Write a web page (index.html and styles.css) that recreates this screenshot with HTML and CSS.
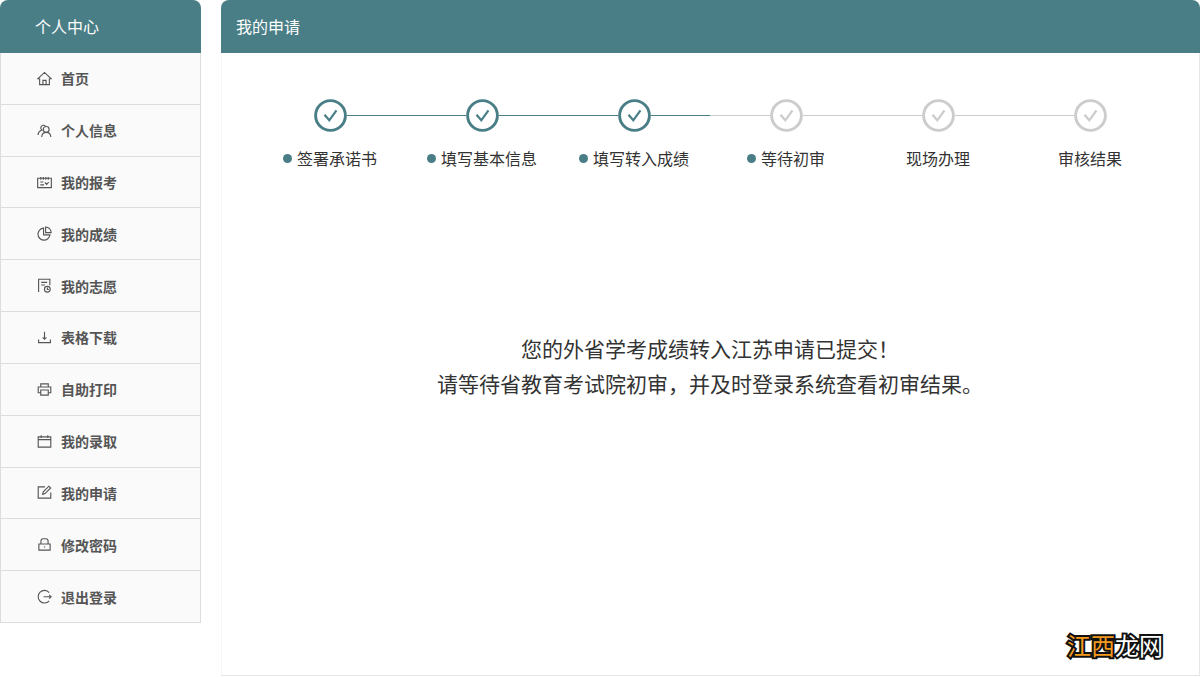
FILE: index.html
```html
<!DOCTYPE html>
<html lang="zh-CN">
<head>
<meta charset="utf-8">
<meta name="viewport" content="width=device-width, initial-scale=1">
<title>我的申请</title>
<link rel="stylesheet" href="styles.css">
</head>
<body>
<svg class="symbols" aria-hidden="true">
  <symbol id="check" viewBox="0 0 33 33">
    <circle cx="16.5" cy="16.5" r="14.9" stroke-width="2.9"/>
    <path d="M10.5 15.8 15.3 21.3 22.5 11.3" stroke-width="2.2"/>
  </symbol>
</svg>
<div class="page">
  <aside class="sidebar">
    <h2 class="bar bar-side">个人中心</h2>
    <nav class="menu" aria-label="个人中心">
      <a class="item" href="#"><svg class="icon" viewBox="0 0 16 16"><path d="M2.8 8.3H.8L8 1.5l7.2 6.8h-2M2.8 8v6.5h10.4V8M6.3 14.5V10h3.4v4.5"/></svg>首页</a>
      <a class="item" href="#"><svg class="icon" viewBox="0 0 16 16"><circle cx="9.8" cy="6.8" r="3.1"/><path d="M5 15c.2-3 2-5 4.8-5s4.7 2 5 5M6 8A2.9 2.9 0 1 1 9 3.2M1 12.7C1.3 10.400 2.400 8.700 4.700 7.800"/></svg>个人信息</a>
      <a class="item" href="#"><svg class="icon" viewBox="0 0 16 16"><path d="M.7 3.500h14.600v10H.7zM4 2v3M6.700 2v3M9.400 2v3M12 2v3M3.500 7.500h3.200M3.500 10.500h4M8.500 8l1.800 2 2.200-2.300"/></svg>我的报考</a>
      <a class="item" href="#"><svg class="icon" viewBox="0 0 16 16"><path d="M7 2.300a6.400 6.400 0 1 0 6.800 7.200H7zM9.200 1v6h5.900A6.100 6.100 0 0 0 9.200 1z"/></svg>我的成绩</a>
      <a class="item" href="#"><svg class="icon" viewBox="0 0 16 16"><path d="M1.700 15V1.300h12V7.800M4.500 4.700h6.300M4.500 7.500h4"/><circle cx="11" cy="12" r="3.100"/><path d="M11 10v2.300h1.700"/></svg>我的志愿</a>
      <a class="item" href="#"><svg class="icon" viewBox="0 0 16 16"><path d="M1.700 10v3.500h12.600V10M8 1.800v8M6 7.800l2 2.100 2-2.100"/></svg>表格下载</a>
      <a class="item" href="#"><svg class="icon" viewBox="0 0 16 16"><path d="M4 5.300V2h8v3.300M4 11.500H1.300V5.300h13.400v6.200H12M4 8.500h8V14H4z"/></svg>自助打印</a>
      <a class="item" href="#"><svg class="icon" viewBox="0 0 16 16"><path d="M1.300 3h13.400v11H1.300zM1.300 6h13.400M4.500 1.300v3M11.500 1.300v3"/></svg>我的录取</a>
      <a class="item" href="#"><svg class="icon" viewBox="0 0 16 16"><path d="M8.500 2H1.300v12h13.400V8M6 10l.7-2.700 6-6 1.900 1.900-6 6z"/></svg>我的申请</a>
      <a class="item" href="#"><svg class="icon" viewBox="0 0 16 16"><path d="M2 7.500h12v6.500H2zM4.200 7.500V4.300Q4.200 1.800 6.500 1.800h3Q11.800 1.800 11.800 4.300v3.200M7.300 10.700h1.400"/></svg>修改密码</a>
      <a class="item" href="#"><svg class="icon" viewBox="0 0 16 16"><path d="M13 3.800a6.700 6.700 0 1 0 0 8.800M7 8.200h8M13 6.200l2 2-2 2"/></svg>退出登录</a>
    </nav>
  </aside>
  <main class="panel">
    <h1 class="bar">我的申请</h1>
    <div class="content">
      <ol class="steps">
        <li class="step done"><div class="track"><span class="line"></span><svg class="mark"><use href="#check"/></svg><span class="line"></span></div><div class="label dot">签署承诺书</div></li>
        <li class="step done"><div class="track"><span class="line"></span><svg class="mark"><use href="#check"/></svg><span class="line"></span></div><div class="label dot">填写基本信息</div></li>
        <li class="step done"><div class="track"><span class="line"></span><svg class="mark"><use href="#check"/></svg><span class="line"></span></div><div class="label dot">填写转入成绩</div></li>
        <li class="step"><div class="track"><span class="line"></span><svg class="mark"><use href="#check"/></svg><span class="line"></span></div><div class="label dot">等待初审</div></li>
        <li class="step"><div class="track"><span class="line"></span><svg class="mark"><use href="#check"/></svg><span class="line"></span></div><div class="label">现场办理</div></li>
        <li class="step"><div class="track"><span class="line"></span><svg class="mark"><use href="#check"/></svg><span class="line"></span></div><div class="label">审核结果</div></li>
      </ol>
      <p class="message">您的外省学考成绩转入江苏申请已提交！<br>请等待省教育考试院初审，并及时登录系统查看初审结果。</p>
    </div>
    <div class="watermark"><span class="accent">江西</span>龙网</div>
  </main>
</div>
</body>
</html>
```
FILE: styles.css
```css
* {
  box-sizing: border-box;
}

body {
  margin: 0;
  background: #fff;
  color: #333;
  font-family: "Noto Sans CJK SC", sans-serif;
}

.symbols {
  display: block;
  width: 0;
  height: 0;
}

.page {
  display: flex;
  align-items: flex-start;
  gap: 20px;
}

.sidebar {
  flex: 0 0 201px;
}

.bar {
  margin: 0;
  padding: 14px 15px 15px;
  border-radius: 8px 8px 0 0;
  background: #497e86;
  color: #fff;
  font-size: 16px;
  font-weight: 400;
  line-height: 24px;
}

.bar-side {
  padding-left: 35px;
}

.menu {
  display: grid;
  grid-auto-rows: 1fr;
  min-height: 570px;
  border: solid #ddd;
  border-width: 0 1px;
  background: #fafafa;
}

.item {
  display: flex;
  align-items: center;
  gap: 9px;
  padding-left: 36px;
  border-bottom: 1px solid #ddd;
  color: #555;
  font-size: 14px;
  font-weight: 700;
  line-height: 20px;
  text-decoration: none;
}

.icon {
  width: 15px;
  height: 15px;
  fill: none;
  stroke: #555;
  stroke-width: 1.2;
}

.panel {
  position: relative;
  flex: 1;
  min-width: 0;
}

.content {
  min-height: 623px;
  padding: 46px 33px 0 32px;
  border: solid #e6e6e6;
  border-width: 0 1px 1px;
  border-left-color: #f6f6f6;
}

.steps {
  display: grid;
  grid-template-columns: repeat(6, 1fr);
  margin: 0;
  padding: 0;
  list-style: none;
}

.step {
  color: #ccc;
}

.done {
  color: #497e86;
}

.track {
  display: flex;
  align-items: center;
}

.line {
  flex: 1;
  height: 1px;
  background: currentColor;
}

.step:first-child .line:first-child,
.step:last-child .line:last-child {
  visibility: hidden;
}

.mark {
  width: 33px;
  height: 33px;
  fill: none;
  stroke: currentColor;
}

.label {
  display: flex;
  align-items: center;
  justify-content: center;
  gap: 5px;
  margin-top: 14px;
  color: #333;
  font-size: 16px;
  line-height: 24px;
  white-space: nowrap;
}

.dot::before {
  content: "";
  width: 9px;
  height: 9px;
  border-radius: 50%;
  background: #497e86;
}

.message {
  margin: 161px 0 0;
  font-size: 21px;
  line-height: 35px;
  text-align: center;
}

.watermark {
  position: absolute;
  right: 37px;
  bottom: 13px;
  color: #fff;
  font-size: 24px;
  font-weight: 400;
  line-height: 36px;
  -webkit-text-stroke: 4px #111;
  paint-order: stroke fill;
}

.accent {
  color: #f39a1e;
}
```
